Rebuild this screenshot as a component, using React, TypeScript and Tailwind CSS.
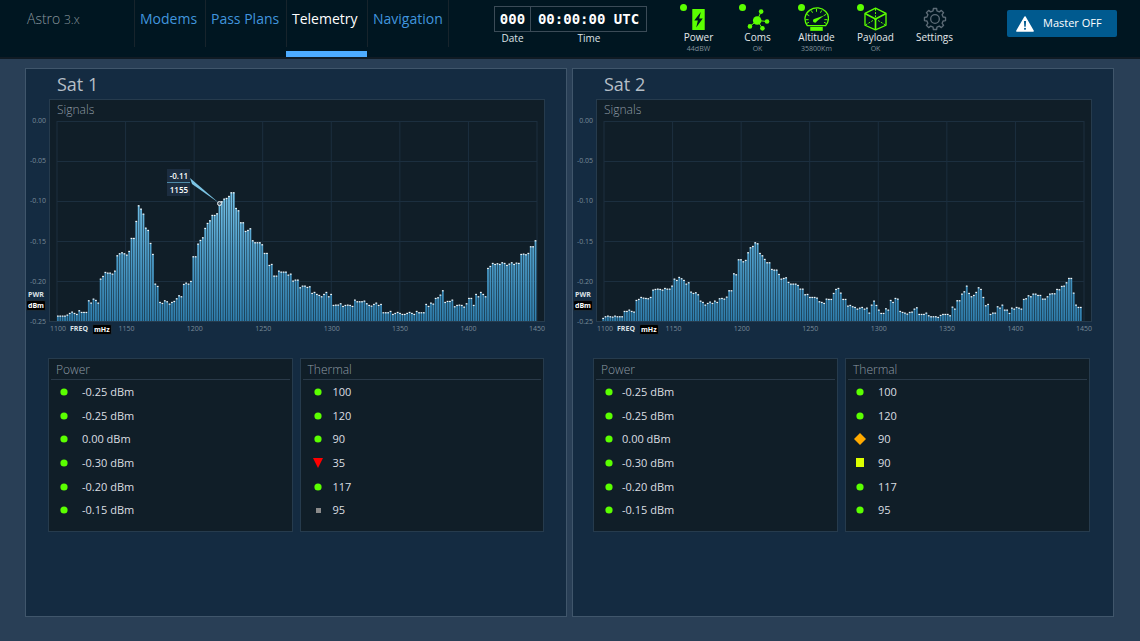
import type { ReactNode } from "react";

type Status = "normal" | "critical" | "serious" | "caution" | "off";

type Reading = { status: Status; value: string };

type Satellite = {
  name: string;
  /** raw count that maps to -0.25 dBm */
  floor: number;
  samples: number[];
  offset: number;
  marker?: { power: string; freq: string };
  compact?: boolean;
  power: string[];
  thermal: Reading[];
};

const powerReadings = [
  "-0.25 dBm",
  "-0.25 dBm",
  "0.00 dBm",
  "-0.30 dBm",
  "-0.20 dBm",
  "-0.15 dBm",
];

const satellites: Satellite[] = [
  {
    name: "Sat 1",
    floor: 663,
    offset: 0,
    samples: [
      648, 648, 648, 648, 645, 640, 636, 640, 643, 632, 637, 637, 637, 602, 609,
      597, 601, 609, 537, 529, 517, 519, 519, 522, 513, 467, 461, 458, 461, 465,
      454, 415, 415, 364, 317, 327, 342, 384, 391, 430, 463, 552, 559, 607, 610,
      602, 605, 612, 607, 604, 596, 587, 590, 553, 549, 552, 544, 470, 470, 432,
      421, 413, 385, 370, 362, 346, 346, 341, 315, 305, 297, 295, 289, 278, 278,
      325, 332, 368, 368, 394, 391, 386, 422, 428, 428, 428, 434, 460, 460, 496,
      493, 528, 528, 513, 516, 516, 516, 525, 522, 543, 540, 540, 563, 558, 558,
      562, 560, 580, 577, 583, 586, 590, 583, 577, 590, 583, 616, 615, 615, 611,
      619, 616, 615, 616, 619, 600, 605, 605, 605, 603, 611, 616, 618, 613, 609,
      616, 613, 638, 638, 638, 634, 643, 640, 637, 640, 643, 643, 640, 637, 640,
      643, 634, 638, 638, 638, 613, 619, 609, 612, 595, 593, 585, 572, 607, 604,
      604, 600, 620, 616, 615, 616, 621, 611, 595, 595, 616, 583, 590, 577, 583,
      590, 505, 499, 490, 493, 491, 493, 488, 490, 496, 492, 488, 493, 489, 490,
      463, 462, 464, 460, 440, 440, 422,
    ],
    marker: { power: "-0.11", freq: "1155" },
    power: powerReadings,
    thermal: [
      { status: "normal", value: "100" },
      { status: "normal", value: "120" },
      { status: "normal", value: "90" },
      { status: "critical", value: "35" },
      { status: "normal", value: "117" },
      { status: "off", value: "95" },
    ],
  },
  {
    name: "Sat 2",
    floor: 693,
    offset: -1.7,
    samples: [
      685, 680, 678, 680, 681, 678, 680, 680, 680, 664, 664, 660, 664, 666, 631,
      628, 622, 624, 625, 626, 622, 600, 598, 597, 598, 600, 595, 597, 597, 588,
      567, 571, 562, 566, 571, 582, 578, 606, 610, 608, 614, 633, 637, 645, 640,
      636, 640, 633, 637, 626, 625, 627, 621, 602, 602, 551, 554, 509, 509, 515,
      511, 488, 473, 469, 458, 461, 490, 497, 508, 518, 518, 538, 540, 540, 553,
      567, 565, 563, 577, 582, 582, 582, 586, 597, 597, 614, 613, 622, 622, 622,
      624, 635, 637, 640, 627, 628, 628, 610, 598, 595, 609, 628, 628, 648, 646,
      650, 652, 657, 654, 652, 657, 654, 669, 645, 633, 646, 660, 670, 670, 656,
      660, 631, 637, 625, 627, 664, 667, 669, 672, 667, 666, 657, 653, 673, 673,
      673, 669, 677, 680, 680, 680, 682, 676, 673, 673, 673, 677, 651, 657, 632,
      632, 612, 605, 588, 610, 620, 616, 607, 593, 598, 622, 647, 643, 673, 669,
      669, 650, 654, 645, 660, 660, 670, 654, 657, 652, 654, 657, 628, 626, 617,
      620, 612, 612, 616, 616, 627, 627, 620, 612, 611, 611, 598, 599, 589, 588,
      578, 565, 565, 609, 645, 652, 652,
    ],
    compact: true,
    power: powerReadings,
    thermal: [
      { status: "normal", value: "100" },
      { status: "normal", value: "120" },
      { status: "serious", value: "90" },
      { status: "caution", value: "90" },
      { status: "normal", value: "117" },
      { status: "normal", value: "95" },
    ],
  },
];

const navLinks = ["Modems", "Pass Plans", "Telemetry", "Navigation"];
const powerTicks = ["0.00", "-0.05", "-0.10", "-0.15", "-0.20", "-0.25"];
const freqTicks = ["1150", "1200", "1250", "1300", "1350", "1400", "1450"];

function PowerIcon() {
  return (
    <svg viewBox="0 0 38 64" className="h-[21px] w-[13px]" aria-hidden="true">
      <rect width="38" height="64" rx="1" fill="#5bff00" />
      <path d="M26 9 6 35h11l-5 21 20-27H21z" fill="#001621" />
    </svg>
  );
}

function ComsIcon() {
  return (
    <svg viewBox="0 0 74 70" className="h-[23px] w-[25px]" aria-hidden="true">
      <g stroke="#5bff00" strokeWidth="3">
        <path d="m36 38 12-27M36 38l30 3M36 38l16 24M36 38 14 56" />
      </g>
      <g fill="#5bff00">
        <circle cx="36" cy="38" r="13" />
        <circle cx="48" cy="11" r="7" />
        <circle cx="66" cy="41" r="7" />
        <circle cx="52" cy="62" r="7" />
        <circle cx="14" cy="56" r="7" />
      </g>
    </svg>
  );
}

function AltitudeIcon() {
  return (
    <svg viewBox="0 0 76 72" className="h-6 w-[25px]" aria-hidden="true">
      <path
        d="M10 56C-2 40 2 20 18 9s36-8 48 4 10 32 0 43z"
        fill="none"
        stroke="#5bff00"
        strokeWidth="4"
      />
      <path
        d="M38 5v9M22 10l4 7M54 10l-4 7M9 22l7 4M67 22l-7 4M5 38h9M71 38h-9M9 49l6-3M67 49l-6-3"
        stroke="#5bff00"
        strokeWidth="3"
      />
      <path d="m61 25-28 10a6 6 0 1 0 6 8z" fill="#5bff00" />
      <path d="M19 60h38v12H19z" fill="#5bff00" />
    </svg>
  );
}

function PayloadIcon() {
  return (
    <svg viewBox="0 0 70 72" className="h-6 w-[23px]" aria-hidden="true">
      <g fill="none" stroke="#5bff00" strokeWidth="4" strokeLinejoin="round">
        <path d="m35 3 32 16v36L35 69 3 55V19z" />
        <path d="m3 19 32 17 32-17M35 36v33" strokeWidth="5" />
        <path
          d="M35 5v30M5 54l28-17M65 54 37 37"
          strokeWidth="3"
          strokeDasharray="6 4"
        />
      </g>
    </svg>
  );
}

function SettingsIcon() {
  const teeth = Array.from({ length: 8 }, (_, i) => {
    const mid = (i * Math.PI) / 4;
    return [
      [25, -0.24],
      [32, -0.15],
      [32, 0.15],
      [25, 0.24],
    ]
      .map(([r, a]) => {
        const x = 36 + r * Math.sin(mid + a);
        const y = 36 - r * Math.cos(mid + a);
        return `${x.toFixed(1)},${y.toFixed(1)}`;
      })
      .join(" ");
  }).join(" ");

  return (
    <svg viewBox="0 0 72 72" className="size-6" aria-hidden="true">
      <g fill="none" stroke="#5d6c77" strokeWidth="4" strokeLinejoin="round">
        <polygon points={teeth} />
        <circle cx="36" cy="36" r="13" />
      </g>
    </svg>
  );
}

function WarningIcon() {
  return (
    <svg viewBox="0 0 52 46" className="h-4 w-[18px]" aria-hidden="true">
      <path
        d="M26 3 49 43H3z"
        fill="#fff"
        stroke="#fff"
        strokeWidth="5"
        strokeLinejoin="round"
      />
      <path d="M23 14h6l-1 17h-4z" fill="#005a8f" />
      <circle cx="26" cy="37" r="3" fill="#005a8f" />
    </svg>
  );
}

function Monitor({
  label,
  sub,
  icon,
}: {
  label: string;
  sub?: string;
  icon: ReactNode;
}) {
  return (
    <button
      type="button"
      className="relative flex w-[59px] flex-col items-center pt-[7px]"
    >
      {sub && (
        <span className="absolute top-[4px] left-[11px] size-[7px] rounded-full bg-[#5bff00]" />
      )}
      <span className="flex h-6 items-center">{icon}</span>
      <span className="text-[10px] leading-[13px] text-[#e3e7ea]">{label}</span>
      {sub && (
        <span className="text-[7px] leading-[9px] text-[#82919b]">{sub}</span>
      )}
    </button>
  );
}

function Header() {
  return (
    <header className="flex h-[59px] border-b-2 border-[#101b24] bg-[#001621]">
      <div className="w-[134px] pt-[9px] pl-[27px] text-[14px] leading-5 font-light text-[#8a979f]">
        Astro <span className="text-[12px]">3.x</span>
      </div>
      <nav
        aria-label="Main"
        className="grid grid-cols-[71px_81px_81px_81px_1px]"
      >
        {navLinks.map((link) => {
          const active = link === "Telemetry";
          return (
            <a
              key={link}
              href="#"
              aria-current={active ? "page" : undefined}
              className="flex flex-col justify-between"
            >
              <span
                className={
                  active
                    ? "h-[47px] border-l border-[#17242c] pt-[9px] pl-[5px] text-[14px] leading-5 whitespace-nowrap text-white"
                    : "h-[47px] border-l border-[#17242c] pt-[9px] pl-[5px] text-[14px] leading-5 whitespace-nowrap text-[#4095de]"
                }
              >
                {link}
              </span>
              {active && <span className="h-[6px] bg-[#4dacff]" />}
            </a>
          );
        })}
        <span className="h-[47px] border-l border-[#17242c]" />
      </nav>

      <div className="ml-[45px] grid grid-cols-[37px_116px] content-start pt-[6px] text-center text-[10px] leading-3 text-[#dde2e6]">
        <span className="border border-[#3b4b57] font-['DejaVu_Sans_Mono',monospace] text-[14px] leading-6 font-bold text-white">
          000
        </span>
        <span className="border border-l-0 border-[#3b4b57] font-['DejaVu_Sans_Mono',monospace] text-[14px] leading-6 font-bold text-white">
          00:00:00 UTC
        </span>
        <span>Date</span>
        <span>Time</span>
      </div>

      <div className="ml-[22px] flex items-start">
        <Monitor label="Power" sub="44dBW" icon={<PowerIcon />} />
        <Monitor label="Coms" sub="OK" icon={<ComsIcon />} />
        <Monitor label="Altitude" sub="35800Km" icon={<AltitudeIcon />} />
        <Monitor label="Payload" sub="OK" icon={<PayloadIcon />} />
        <Monitor label="Settings" icon={<SettingsIcon />} />
      </div>

      <button
        type="button"
        className="mt-[10px] mr-[23px] ml-auto flex h-[27px] w-[110px] items-center gap-[9px] rounded-xs bg-[#005a8f] pl-[9px] text-[11px] whitespace-nowrap text-white"
      >
        <WarningIcon />
        Master OFF
      </button>
    </header>
  );
}

function Spectrum({ sat }: { sat: Satellite }) {
  const pitch = 480 / sat.samples.length;
  const gradientId = `bars-${sat.name.replace(" ", "-")}`;

  return (
    <div className="relative">
      <svg
        viewBox="0 0 480 200"
        preserveAspectRatio="none"
        className="block h-[200px] w-full overflow-visible"
        role="img"
        aria-label={`${sat.name} signal power by frequency`}
      >
        <defs>
          <linearGradient
            id={gradientId}
            gradientUnits="userSpaceOnUse"
            x1="0"
            y1="60"
            x2="0"
            y2="200"
          >
            <stop offset="0" stopColor="#7cc9ee" />
            <stop offset="0.5" stopColor="#4f9fcb" />
            <stop offset="1" stopColor="#2f7ead" />
          </linearGradient>
        </defs>

        <g stroke="#1c2f3f">
          {Array.from({ length: 5 }, (_, i) => (
            <line key={i} x1="0" x2="480" y1={i * 40 + 0.5} y2={i * 40 + 0.5} />
          ))}
          {Array.from({ length: 8 }, (_, i) => (
            <line key={i} y1="0" y2="200" x1={(i * 480) / 7} x2={(i * 480) / 7} />
          ))}
        </g>

        {sat.samples.map((count, i) => {
          const h = (sat.floor - count) / 3;
          const x = sat.offset + i * pitch;
          return (
            <g key={i}>
              <rect
                x={x}
                y={200 - h}
                width="1.8"
                height={h}
                fill={`url(#${gradientId})`}
              />
              <rect x={x} y={199.5 - h} width="1.7" height="1.2" fill="#f1f6f8" />
            </g>
          );
        })}

        {sat.marker && (
          <>
            <path d="m133 57 2 6 27 19z" fill="#7cc4e4" />
            <circle cx="162.5" cy="82.5" r="2" fill="#4b5b68" stroke="#e5ebef" />
          </>
        )}
      </svg>

      {sat.marker && (
        <div className="absolute top-[48px] left-[23%] w-[23px] bg-[#1c2d40] text-center text-[8px] leading-[13px] font-semibold text-white">
          <div className="border-b border-[#4e8aa8]">{sat.marker.power}</div>
          <div>{sat.marker.freq}</div>
        </div>
      )}
    </div>
  );
}

function Unit({ children }: { children: string }) {
  return (
    <span className="rounded-xs border border-[#1a2a37] bg-black px-px leading-[9px] font-bold text-white">
      {children}
    </span>
  );
}

const statusShapes: Record<Status, ReactNode> = {
  normal: <circle cx="6" cy="6" r="3.6" fill="#5bff00" />,
  critical: <path d="M1 1h10L6 11z" fill="#ff0000" />,
  serious: <path d="m6 0 6 6-6 6-6-6z" fill="#ffaa00" />,
  caution: <path d="M2 1h8v9H2z" fill="#ddff00" />,
  off: <path d="M4 4h5v5H4z" fill="#8a8a8a" />,
};

function Readings({
  title,
  rows,
  rowClass,
}: {
  title: string;
  rows: Reading[];
  rowClass: string;
}) {
  return (
    <section className="h-[174px] border border-[#263b4d] bg-[#101e28] px-[2px]">
      <h3 className="h-[21px] border-b border-[#2a3a49] pl-[5px] text-[12px] leading-[22px] font-light text-[#8f9ba4]">
        {title}
      </h3>
      <ul className="flex h-[142px] flex-col">
        {rows.map((row, i) => (
          <li
            key={i}
            className={`flex flex-1 items-center text-[11px] leading-4 text-[#dbdfe2] ${rowClass}`}
          >
            <svg
              viewBox="0 0 12 12"
              className="size-3"
              role="img"
              aria-label={row.status}
            >
              {statusShapes[row.status]}
            </svg>
            {row.value}
          </li>
        ))}
      </ul>
    </section>
  );
}

function SatellitePanel({ sat }: { sat: Satellite }) {
  return (
    <section className="border border-[#40566b] bg-[#142b41] pr-[21px] pl-[2px]">
      <h2 className="pl-[29px] text-[18px] leading-[30px] text-[#b5bec6]">
        {sat.name}
      </h2>

      <div className="flex">
        {/* power axis, ticks line up with the grid rows */}
        <div className="-mb-1 flex w-[21px] flex-col justify-between pt-[18px] pr-[3px] text-right text-[7px] leading-[8px] text-[#788a98]">
          {powerTicks.map((tick) => (
            <div key={tick} className="flex h-2 flex-col items-end">
              {tick}
              {tick === "-0.20" && (
                <div className="flex flex-col items-center pt-[5px] font-bold text-[#dbe1e6]">
                  PWR
                  <span className="mt-px flex">
                    <Unit>dBm</Unit>
                  </span>
                </div>
              )}
            </div>
          ))}
        </div>
        <div className="flex-1 border border-[#263b4d] bg-[#101e28] px-[7px]">
          <h3 className="h-[21px] text-[12px] leading-5 font-light text-[#8f9ba4]">
            Signals
          </h3>
          <Spectrum sat={sat} />
        </div>
      </div>

      <div className="ml-[22px] flex h-[14px] items-center justify-between text-[7px] text-[#788a98]">
        <div className="flex w-4 items-center gap-1 whitespace-nowrap">
          <span>1100</span>
          <span className="font-bold text-[#dbe1e6]">FREQ</span>
          <Unit>mHz</Unit>
        </div>
        {freqTicks.map((tick) => (
          <span key={tick} className="w-4">
            {tick}
          </span>
        ))}
      </div>

      <div
        className={
          sat.compact
            ? "mt-[22px] mr-[2px] ml-[18px] grid grid-cols-2 gap-[7px]"
            : "mt-[22px] mr-px ml-5 grid grid-cols-2 gap-[7px]"
        }
      >
        <Readings
          title="Power"
          rows={sat.power.map((value) => ({ status: "normal", value }))}
          rowClass={sat.compact ? "gap-[7px] pl-[7px]" : "gap-3 pl-[7px]"}
        />
        <Readings
          title="Thermal"
          rows={sat.thermal}
          rowClass={sat.compact ? "gap-3 pl-[6px]" : "gap-[9px] pl-[9px]"}
        />
      </div>
    </section>
  );
}

export default function App() {
  return (
    <div className="flex min-h-screen flex-col bg-[#293f56] font-['Open_Sans',sans-serif]">
      <Header />
      <main className="grid flex-1 grid-cols-2 gap-[5px] pt-[9px] pr-[26px] pb-6 pl-[25px]">
        {satellites.map((sat) => (
          <SatellitePanel key={sat.name} sat={sat} />
        ))}
      </main>
    </div>
  );
}
